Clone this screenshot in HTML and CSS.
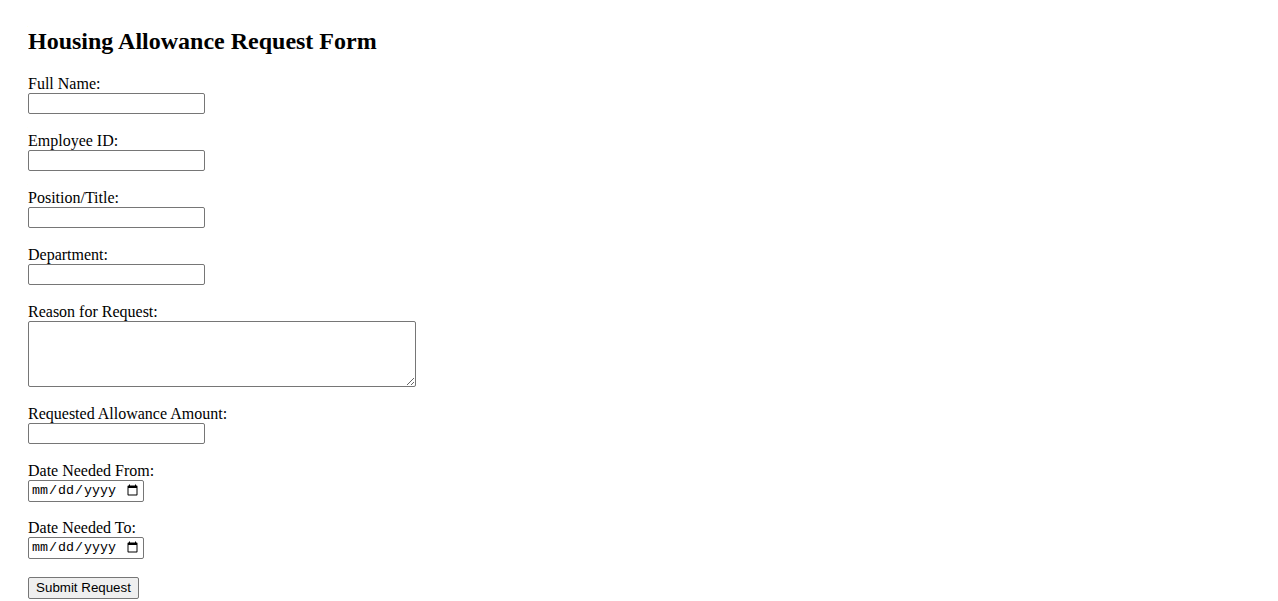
FILE: index.html
```html
<!DOCTYPE html>
<html>
<head>
<meta charset="utf-8">
<title>Housing Allowance Request Form</title>
<link rel="stylesheet" href="styles.css">
</head>
<body>
<div class="page">
<h2 class="title">Housing Allowance Request Form</h2>
<form class="form">
<label for="name">Full Name:</label><br>
<input type="text" id="name" class="field"><br><br>
<label for="emp">Employee ID:</label><br>
<input type="text" id="emp" class="field"><br><br>
<label for="pos">Position/Title:</label><br>
<input type="text" id="pos" class="field"><br><br>
<label for="dept">Department:</label><br>
<input type="text" id="dept" class="field"><br><br>
<label for="reason">Reason for Request:</label><br>
<textarea id="reason" class="area"></textarea><br><br>
<label for="amt">Requested Allowance Amount:</label><br>
<input type="text" id="amt" class="field"><br><br>
<label for="from">Date Needed From:</label><br>
<input type="date" id="from" class="date"><br><br>
<label for="to">Date Needed To:</label><br>
<input type="date" id="to" class="date"><br><br>
<button type="submit" class="submit">Submit Request</button>
</form>
</div>
</body>
</html>
```
FILE: styles.css
```css
body {
  margin: 8px;
  font-family: "Liberation Serif", "Times New Roman", serif;
  font-size: 16px;
  color: #000;
  background: #fff;
}
.page {
  padding: 0 20px;
}
.title {
  font-size: 24px;
  font-weight: bold;
  margin: 20px 0 20px;
}
.field {
  font-family: "Liberation Sans", Arial, sans-serif;
  font-size: 13.333px;
  width: 177px;
  height: 21px;
  box-sizing: border-box;
  border: 1px solid #767676;
  border-radius: 2px;
  padding: 1px 2px;
}
.area {
  font-family: "Liberation Mono", monospace;
  font-size: 13.333px;
  width: 388px;
  height: 66px;
  box-sizing: border-box;
  border: 1px solid #767676;
  border-radius: 2px;
  vertical-align: top;
  margin: 0;
}
.date {
  font-family: "Liberation Mono", monospace;
  font-size: 13.333px;
  width: 116px;
  height: 22px;
  margin-bottom: -1px;
  box-sizing: border-box;
  border: 1px solid #767676;
  border-radius: 2px;
  padding: 1px 2px;
}
.submit {
  font-family: "Liberation Sans", Arial, sans-serif;
  font-size: 13.333px;
  height: 22px;
  width: 111px;
  margin-top: 1px;
  box-sizing: border-box;
  border: 1px solid #767676;
  border-radius: 2px;
  background: #efefef;
  padding: 0 6px 1px;
}
```
